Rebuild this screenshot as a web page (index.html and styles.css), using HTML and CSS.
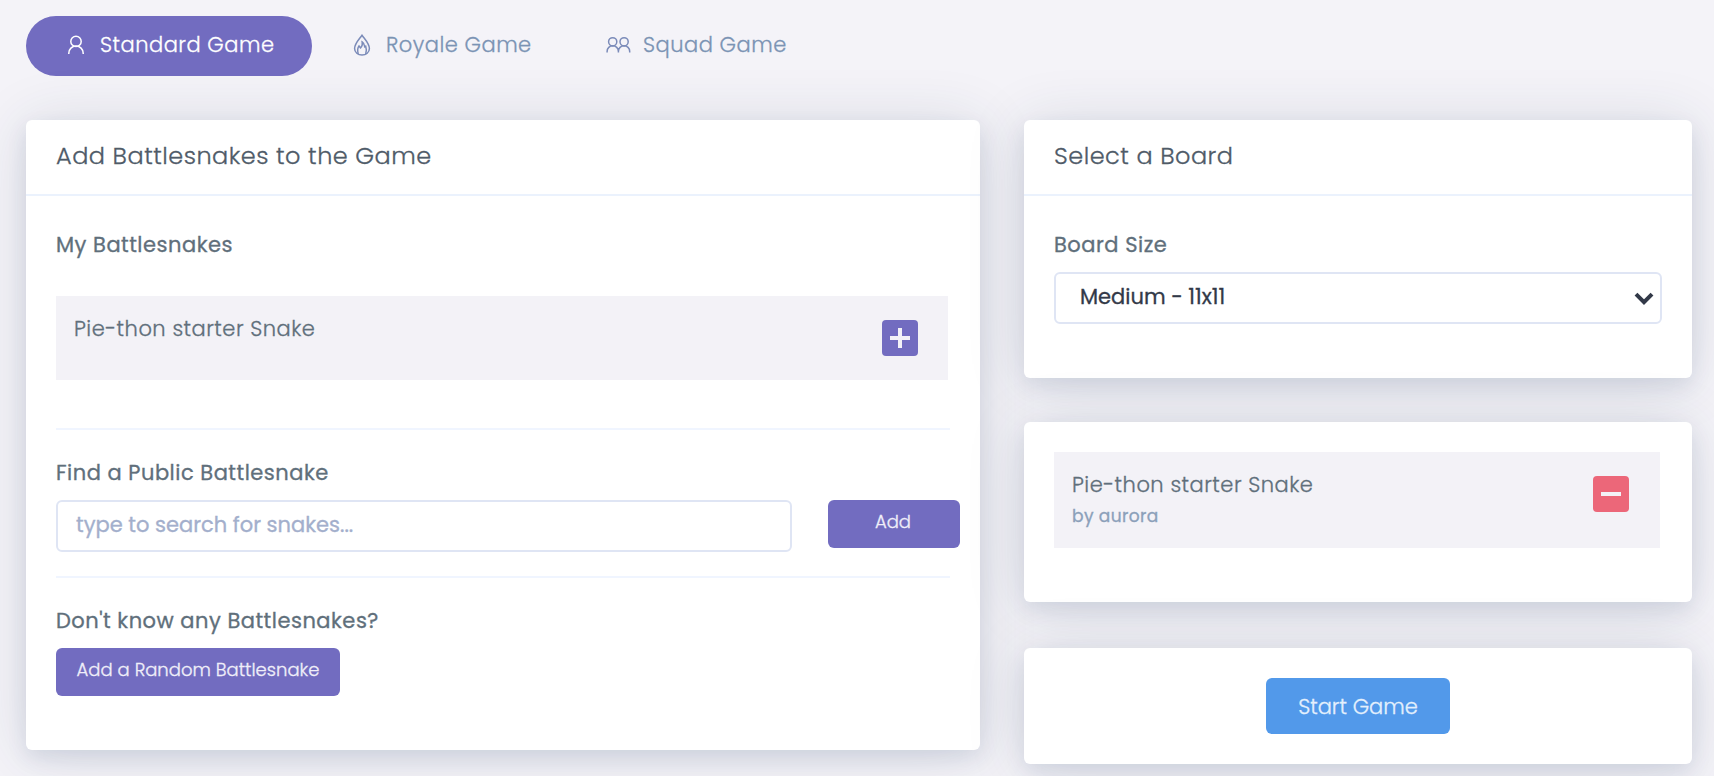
FILE: index.html
```html
<!DOCTYPE html>
<html lang="en">
<head>
<meta charset="utf-8">
<title>Create Game</title>
<link rel="stylesheet" href="styles.css">
</head>
<body>
<nav class="tabs">
  <a class="tab tab-standard active"><svg class="icon" width="24" height="24" viewBox="0 0 24 24"><circle cx="12" cy="8.4" r="5.2"/><path d="M4.8 21v-.8a7.2 7.2 0 0 1 14.4 0v.8"/></svg><span>Standard Game</span></a>
  <a class="tab tab-royale"><svg class="icon" width="24" height="24" viewBox="0 0 24 24"><path d="M12 2.2C9 6.4 4.6 10.600 4.600 15.500c0 4 3.400 6.500 7.400 6.500s7.400-2.500 7.400-6.500C19.400 10.600 15 6.400 12 2.200z"/><path d="M8.200 21c-.9-3.500-.4-6.500.8-8l1.500 2c1.500-1.400 2.200-3.500 1.700-6 2 1.300 2.400 2.800 2.500 4.800l1-.6c1 2.800.8 5.400 0 7.800"/></svg><span>Royale Game</span></a>
  <a class="tab tab-squad"><svg class="icon" width="26" height="24" viewBox="0 0 26 24"><circle cx="7.700" cy="8.800" r="4.100"/><circle cx="19.100" cy="8.800" r="4.100"/><path d="M2.100 19.600v-1.200a5.600 5.600 0 0 1 11.300 0v1.200m0-1.200a5.600 5.600 0 0 1 11.300 0v1.200"/></svg><span>Squad Game</span></a>
</nav>
<main class="columns">
  <section class="card setup">
    <h2 class="card-title">Add Battlesnakes to the Game</h2>
    <div class="card-body">
      <h3 class="label">My Battlesnakes</h3>
      <div class="snake mine">
        <div class="name">Pie-thon starter Snake</div>
        <svg class="square plus" width="36" height="36" viewBox="0 0 36 36"><rect width="36" height="36" rx="4"/><path d="M18 8v20M8 18h20"/></svg>
      </div>
      <hr>
      <h3 class="label">Find a Public Battlesnake</h3>
      <div class="search">
        <div class="field input">type to search for snakes...</div>
        <button class="btn add">Add</button>
      </div>
      <hr>
      <h3 class="label">Don't know any Battlesnakes?</h3>
      <button class="btn random">Add a Random Battlesnake</button>
    </div>
  </section>
  <div class="side">
    <section class="card board">
      <h2 class="card-title">Select a Board</h2>
      <div class="card-body">
        <h3 class="label">Board Size</h3>
        <div class="field select">Medium - 11x11<svg class="chevron" width="20" height="14" viewBox="0 0 20 14"><path d="M2 2.200l8 8 8-8"/></svg></div>
      </div>
    </section>
    <section class="card chosen">
      <div class="snake">
        <div class="name">Pie-thon starter Snake<div class="owner">by aurora</div></div>
        <svg class="square minus" width="36" height="36" viewBox="0 0 36 36"><rect width="36" height="36" rx="4"/><path d="M8 18h20"/></svg>
      </div>
    </section>
    <section class="card launch">
      <button class="btn start">Start Game</button>
    </section>
  </div>
</main>
</body>
</html>
```
FILE: styles.css
```css
* { box-sizing: border-box; }
html { overflow: hidden; }
body {
  margin: 0;
  height: 776px;
  overflow: hidden;
  padding: 16px 22px 0 26px;
  background: #f4f3f8;
  color: #606f7b;
  font: 300 21px/32px Poppins, Inter, sans-serif;
  white-space: nowrap;
  -webkit-text-stroke: .3px currentColor;
}
h2, h3 { margin: 0; }

.tabs { display: flex; height: 60px; margin-bottom: 44px; letter-spacing: .5px; }
.tab {
  display: flex;
  align-items: center;
  height: 60px;
  padding-left: 38px;
  color: #7b93b4;
}
.tab span { margin-left: 12px; padding-bottom: 3px; }
.tab-standard { width: 286px; }
.tab-royale { width: 255px; }
.active { border-radius: 30px; background: #726cc0; color: #fff; }
.icon { flex: none; margin-bottom: 3px; fill: none; stroke: #7b8bb9; stroke-width: 1.500; }
.active .icon { stroke: #fff; }

.columns { display: grid; grid-template-columns: 954px 668px; gap: 44px; align-items: start; }
.card {
  border-radius: 6px;
  background: #fff;
  box-shadow: 0 4px 60px rgba(35, 55, 75, .14), 0 8px 20px rgba(50, 70, 125, .11);
}
.setup { height: 630px; }
.board { height: 258px; margin-bottom: 44px; }
.chosen { height: 180px; margin-bottom: 46px; padding: 30px 32px 0 30px; }
.launch { display: flex; justify-content: center; height: 116px; padding-top: 30px; }
.card-title {
  height: 76px;
  padding: 20px 30px 0;
  border-bottom: 2px solid #ebf2fd;
  color: #4f5b68;
  font-size: 24px;
  font-weight: 300;
  letter-spacing: .5px;
}
.card-body { padding: 32px 30px 0; }
.label { height: 44px; padding-top: 1px; font-size: 21px; font-weight: 400; letter-spacing: .5px; }
.snake {
  display: flex;
  justify-content: space-between;
  height: 96px;
  padding: 16px 31px 0 18px;
  background: #f3f2f7;
}
.name { padding-top: 1px; letter-spacing: .5px; }
.mine { width: 892px; height: 84px; margin: 24px 0 48px; padding-right: 30.5px; }
.square { margin-top: 8px; stroke: #f3f2f7; stroke-width: 4; }
.plus rect { fill: #726cc0; stroke: none; }
.minus rect { fill: #ec6779; stroke: none; }
.owner { height: 24px; color: #8ba0ba; font-size: 17px; font-weight: 400; line-height: 30px; letter-spacing: .4px; }
hr { height: 2px; margin: 0 0 26px; border: 0; background: #f0f5ff; }
.field {
  display: flex;
  height: 52px;
  border: 2px solid #dfe5f4;
  border-radius: 6px;
  background: #fff;
  padding: 7px 18px 5px;
  font-weight: 400;
}
.input { width: 736px; color: #a3afcc; }
.select { justify-content: space-between; padding: 7px 6px 5px 24px; color: #323948; }
.chevron { margin: 11px 0 0; fill: none; stroke: #323948; stroke-width: 4; }
.search { display: flex; gap: 36px; width: 904px; margin-bottom: 24px; }
.btn {
  height: 48px;
  padding: 0 0 4px;
  border: 0;
  border-radius: 6px;
  background: #726cc0;
  color: #f0eff9;
  font: inherit;
  font-size: 18px;
  line-height: 32px;
}
.add { width: 132px; padding-right: 2px; }
.random { width: 284px; }
.start { width: 184px; height: 56px; padding: 2px 0 0; background: #5299ea; color: #e4f0fd; font-size: 21px; }
```
